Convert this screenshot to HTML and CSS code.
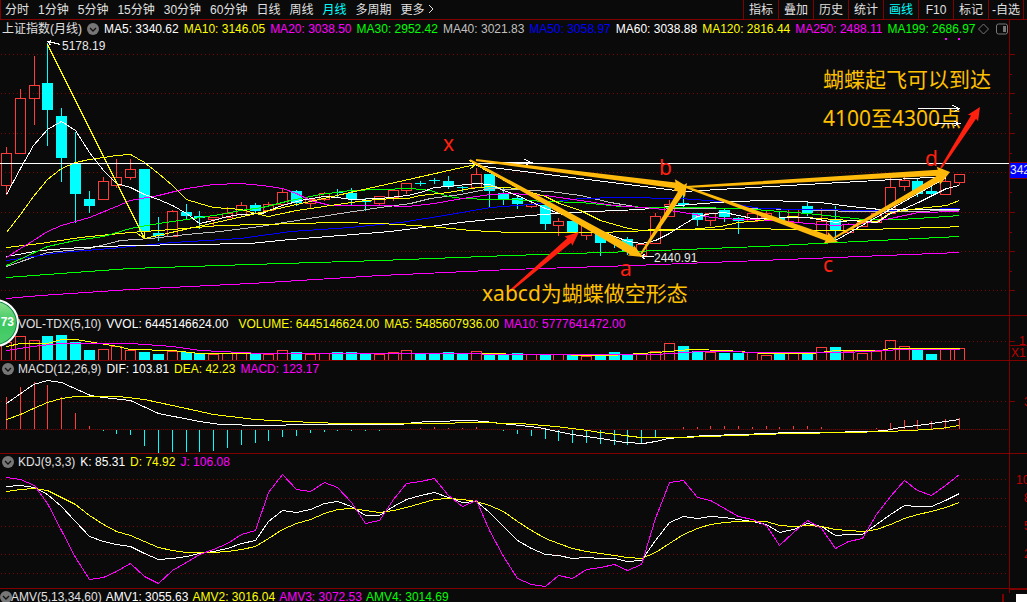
FILE: index.html
```html
<!DOCTYPE html>
<html lang="zh-CN">
<head>
<meta charset="utf-8">
<title>上证指数(月线)</title>
<link rel="stylesheet" href="styles.css">
</head>
<body>
<svg class="defs" width="0" height="0" aria-hidden="true">
  <symbol id="chevron" viewBox="0 0 12 12"><circle cx="6" cy="6" r="6" fill="#777"/><path d="M3 5l3 3 3-3" fill="none" stroke="#111" stroke-width="1.3"/></symbol>
</svg>
<header class="toolbar">
  <nav class="periods">
    <button>分时</button><button>1分钟</button><button>5分钟</button><button>15分钟</button><button>30分钟</button><button>60分钟</button><button>日线</button><button>周线</button><button class="active">月线</button><button>多周期</button><button>更多<svg class="more" viewBox="0 0 6 10"><path d="M1 1l4 4-4 4" fill="none" stroke="currentColor"/></svg></button>
  </nav>
  <nav class="tools">
    <button>指标</button><button>叠加</button><button>历史</button><button>统计</button><button class="active">画线</button><button>F10</button><button>标记</button><button>-自选</button>
  </nav>
</header>
<main>
  <section class="panel">
    <div class="legend legend-main">
      <span class="title">上证指数(月线)</span>
      <button class="toggle" aria-label="展开"><svg viewBox="0 0 12 12"><use href="#chevron"/></svg></button>
      <span class="white">MA5: 3340.62</span><span class="yellow">MA10: 3146.05</span><span class="magenta">MA20: 3038.50</span><span class="green">MA30: 2952.42</span><span class="gray">MA40: 3021.83</span><span class="blue">MA50: 3058.97</span><span class="white">MA60: 3038.88</span><span class="yellow">MA120: 2816.44</span><span class="magenta">MA250: 2488.11</span><span class="green">MA199: 2686.97</span>
      <svg class="marks" viewBox="0 0 30 12" fill="none" stroke="#777"><path d="M5.500 1l5 5-5 5-5-5z"/><rect x="18.500" y="1" width="11" height="10" rx="2"/><path d="M25 3h3v6h-3z" fill="#777" stroke="none"/></svg>
    </div>
    <svg class="plot" id="price" viewBox="0 38 1027 277"></svg>
  </section>
  <section class="panel">
    <div class="legend">
      <span class="title">VOL-TDX(5,10)</span><span class="white wide">VVOL: 6445146624.00</span><span class="yellow">VOLUME: 6445146624.00</span><span class="yellow">MA5: 5485607936.00</span><span class="magenta">MA10: 5777641472.00</span>
    </div>
    <svg class="plot" id="volume" viewBox="0 333 1027 27"></svg>
    <div class="badge">73</div>
  </section>
  <section class="panel">
    <div class="legend">
      <button class="toggle" aria-label="展开"><svg viewBox="0 0 12 12"><use href="#chevron"/></svg></button>
      <span class="title">MACD(12,26,9)</span><span class="white">DIF: 103.81</span><span class="yellow">DEA: 42.23</span><span class="magenta">MACD: 123.17</span>
    </div>
    <svg class="plot" id="macd" viewBox="0 378 1027 75"></svg>
  </section>
  <section class="panel">
    <div class="legend">
      <button class="toggle" aria-label="展开"><svg viewBox="0 0 12 12"><use href="#chevron"/></svg></button>
      <span class="title">KDJ(9,3,3)</span><span class="white">K: 85.31</span><span class="yellow">D: 74.92</span><span class="magenta">J: 106.08</span>
    </div>
    <svg class="plot" id="kdj" viewBox="0 471 1027 117"></svg>
  </section>
  <section class="panel last">
    <div class="legend">
      <button class="toggle" aria-label="展开"><svg viewBox="0 0 12 12"><use href="#chevron"/></svg></button>
      <span class="title">AMV(5,13,34,60)</span><span class="white">AMV1: 3055.63</span><span class="yellow">AMV2: 3016.04</span><span class="magenta">AMV3: 3072.53</span><span class="green">AMV4: 3014.69</span>
    </div>
    <svg class="corner" viewBox="0 0 25 13"><path d="M7 0h18v1H8v3H7zM0 5h2v8H0z" fill="#800000"/><path d="M14 5h11v8H14z" fill="#fff"/></svg>
  </section>
</main>
<script src="chart.js"></script>
</body>
</html>
```
FILE: styles.css
```css
* { box-sizing: border-box; }
body {
  margin: 0;
  background: #0a0a0a;
  color: #e0e0e0;
  font: 12px/16px "Liberation Sans", "Noto Sans CJK SC", sans-serif;
  overflow: hidden;
}
button {
  padding: 0;
  border: 0;
  background: none;
  color: inherit;
  font: inherit;
  white-space: nowrap;
}
.defs { position: absolute; }
.toolbar {
  display: flex;
  justify-content: space-between;
  height: 20px;
  border-bottom: 1px solid #800000;
  border-left: 1px solid #800000;
}
.periods { display: flex; gap: 9px; padding-left: 4px; }
.periods .active, .tools .active { color: #00ffff; }
.more { width: 6px; height: 10px; margin-left: 3px; }
.tools { display: flex; padding-right: 3px; }
.tools button { width: 35px; border-left: 1px solid #800000; }
.tools button:last-child { width: 36px; border-right: 1px solid #800000; }
.panel { position: relative; border-bottom: 1px solid #800000; }
.panel.last { display: flex; justify-content: space-between; height: 13px; border: 0; overflow: hidden; }
.legend {
  display: flex;
  align-items: center;
  gap: 5px;
  height: 17px;
  margin-right: 17px;
  padding: 0 0 2px 18px;
  border-right: 1px solid #800000;
  white-space: nowrap;
  overflow: hidden;
}
.legend-main { height: 18px; padding: 0 0 0 2px; }
.last .legend { margin: 0; padding-left: 12px; border: 0; gap: 4px; }
.last .toggle { margin-left: -12px; margin-right: -5px; }
.wide { margin-right: 5px; }
.toggle { flex: none; width: 12px; height: 12px; margin-left: -16px; margin-right: -1px; }
.toggle svg { display: block; width: 12px; height: 12px; }
.legend-main .toggle { margin: 0; }
.marks { flex: none; width: 30px; height: 12px; margin-left: -3px; }
.corner { flex: none; width: 25px; height: 13px; }
.plot { display: block; width: 100%; height: auto; }
.white { color: #fff; }
.yellow { color: #ff0; }
.magenta { color: #f0f; }
.green { color: #0f0; }
.gray { color: #c0c0c0; }
.blue { color: #00f; }
.badge {
  position: absolute;
  top: -17px;
  left: -29px;
  width: 48px;
  height: 48px;
  padding-right: 3px;
  border: 2px solid #fff;
  border-radius: 50%;
  background: linear-gradient(#8ee08e, #3cc860 50%, #4fd070);
  box-shadow: inset 0 0 0 1px #188050;
  color: #fff;
  font: bold 12px/42px "Liberation Sans", sans-serif;
  text-align: right;
}
.axis-text { fill: #c00000; font-size: 12px; }
.price-text { fill: #e8e8e8; font-size: 12px; }
.note { fill: #ffc000; font: 21px "Noto Sans", "Noto Sans CJK SC", sans-serif; }
.point { fill: #ff2010; font: 21px "Noto Sans", sans-serif; }
```
FILE: chart.js
```javascript
const NS = 'http://www.w3.org/2000/svg';
const RED = '#ff3c3c', CYAN = '#00ffff', FRAME = '#800000', GOLD = '#ffb90a';
const cx = i => Math.round(6 + 13.81 * i);

function add(svg, tag, attrs, text) {
  const el = document.createElementNS(NS, tag);
  for (const k in attrs) el.setAttribute(k, attrs[k]);
  if (text) el.textContent = text;
  svg.appendChild(el);
}
function rect(svg, x, y, w, h, fill) {
  add(svg, 'rect', { x, y, width: w, height: h, fill, 'shape-rendering': 'crispEdges' });
}
function box(svg, x, y, w, h) {
  add(svg, 'rect', { x: x + 0.5, y: y + 0.5, width: w - 1, height: Math.max(h - 1, 1), fill: 'none', stroke: RED, 'shape-rendering': 'crispEdges' });
}
function line(svg, pts, color, dash) {
  const points = pts.map(p => (p[0] + 0.5) + ',' + (p[1] + 0.5)).join(' ');
  const attrs = { points, fill: 'none', stroke: color, 'shape-rendering': 'crispEdges' };
  if (dash) attrs['stroke-dasharray'] = dash;
  add(svg, 'polyline', attrs);
}
const pairs = s => s.split(' ').map(p => p.split(',').map(Number));
const series = s => s.split(' ').map((y, i) => [cx(i), +y]);
// dots sit on whole pixels, one in every four
function dots(svg, y, step) {
  let d = '';
  for (let x = 1; x < 1008; x += step) d += 'M' + x + ' ' + y + 'h1v1h-1z';
  add(svg, 'path', { d, fill: FRAME, 'shape-rendering': 'crispEdges' });
}
function grid(svg, ys) { ys.forEach(y => dots(svg, y, 4)); }
function arrow(svg, x1, y1, x2, y2, shaft, head, len, color) {
  const d = Math.hypot(x2 - x1, y2 - y1), ux = (x2 - x1) / d, uy = (y2 - y1) / d;
  const at = (t, o) => (x1 + ux * t - uy * o) + ',' + (y1 + uy * t + ux * o);
  add(svg, 'polygon', { points: [at(0, 1), at(d - len, shaft), at(d - len - 1, head), at(d, 0), at(d - len - 1, -head), at(d - len, -shaft), at(0, -1)].join(' '), fill: color });
}

const price = document.getElementById('price');
grid(price, [54, 93, 133, 172, 212, 251, 290]);
rect(price, 1009, 38, 1, 277, FRAME);
[54, 93, 133, 172, 212, 251, 290].forEach(y => rect(price, 1010, y, 5, 1, FRAME));
[74, 113, 153, 192, 232, 271].forEach(y => rect(price, 1010, y, 2, 1, FRAME));

// direction, body top, body bottom, high, low
const candles = `r,153,185,147,195 r,98,153,89,153 r,85,98,56,125 c,83,110,43,145 c,116,158,108,181 c,163,194,132,222 c,199,206,191,212 r,181,199,177,200 r,177,185,159,188 r,169,177,159,180
c,169,231,169,238 c,233,236,217,240 r,211,236,210,237 c,212,216,204,219 c,216,218,211,228 r,217,219,217,226 r,213,217,207,217 r,205,214,202,217 c,205,211,203,213 r,204,210,202,210
r,192,204,189,204 c,191,203,190,205 r,199,203,199,208 r,193,199,192,201 c,192,193,189,196 c,193,199,188,204 c,201,202,198,210 r,196,203,196,205 r,190,197,190,201 r,183,190,183,194
c,183,184,181,185 c,180,181,178,183 c,181,187,176,188 c,187,188,186,191 r,174,187,168,188 c,174,191,174,207 c,193,199,187,204 c,198,204,195,208 r,204,206,201,208 c,205,224,205,229
r,221,225,218,236 c,221,232,221,232 r,225,235,225,240 c,233,243,233,255 c,240,242,236,247 c,239,251,237,254 r,244,255,243,256 r,216,243,213,243 r,204,216,200,217 c,203,205,189,208
c,213,220,213,225 r,213,220,213,226 c,210,217,209,221 c,218,221,217,233 r,213,221,212,221 r,213,217,211,217 c,218,221,211,222 r,209,222,209,222 c,206,213,202,215 r,221,235,208,235
c,220,231,206,240 r,224,232,223,232 r,222,226,222,226 r,213,222,213,222 r,187,213,178,213 r,180,186,177,191 c,181,194,178,196 c,191,194,181,194 r,181,194,175,194 r,174,182,174,185`.split(/\s+/).map(s => s.split(','));
candles.forEach(([k, t, b, h, l], i) => {
  const x = cx(i); t = +t; b = +b; h = +h; l = +l;
  if (k === 'c') {
    rect(price, x, h, 1, l - h + 1, CYAN);
    rect(price, x - 5, t, 11, Math.max(b - t, 1), CYAN);
  } else {
    rect(price, x, h, 1, t - h, RED);
    rect(price, x, b, 1, Math.max(l - b, 0), RED);
    box(price, x - 5, t, 11, b - t + 1);
  }
});

line(price, pairs('6,277 60,273 130,268 250,264 380,260 510,255 633,251 760,246 837,242 959,236'), '#0f0');
line(price, pairs('6,298 40,295 130,289 250,283 380,275 510,269 633,265 760,260 959,252'), '#f0f');
line(price, pairs('6,266 47,252 89,248 120,240 150,238 186,234 220,231 260,226 290,221 340,213 380,207 410,203 430,198 460,194 490,188 510,189 550,191 580,195 610,202 640,207 690,208 750,208 800,209 850,211 900,211 959,210'), '#c0c0c0');
line(price, pairs('6,260 60,252 110,248 172,242 240,238 290,231 350,227 400,222 450,214 490,207 530,204 580,198 620,197 680,198 720,201 760,208 800,209 880,210 959,208'), '#00f');
line(price, pairs('6,256 40,250 80,247 130,245 190,244 250,243 290,239 340,235 390,231 430,226 460,222 490,219 530,215 570,212 640,209 690,204 730,201 770,200 820,202 850,206 880,209 959,209'), '#fff');
line(price, pairs('6,247 40,243 80,237 130,232 172,229 220,225 260,224 335,222 380,223 430,226 470,230 510,232 600,232 650,230 700,229 750,228 830,230 900,228 940,227 959,226'), '#ff0');
line(price, pairs('6,265 47,246 75,240 103,236 130,228 158,223 186,219 220,214 240,210 262,207 290,200 320,194 350,190 380,189 410,188 430,190 448,196 462,198 490,199 510,199 545,201 580,202 620,206 655,207 690,207 740,208 780,211 807,213 835,216 863,219 900,219 932,217 959,215'), '#0f0');
line(price, pairs('6,257 20,248 33,240 47,231 61,225 89,217 116,206 130,200 158,195 186,188 213,184 240,183 262,185 282,188 296,193 310,200 330,205 380,205 407,206 434,203 462,198 490,194 510,193 545,195 573,199 614,205 655,208 683,212 711,217 738,219 780,220 807,223 835,225 863,223 890,218 904,215 918,212 959,211'), '#f0f');
line(price, pairs('6,232 20,214 33,196 47,179 61,168 75,162 89,159 103,157 116,155 130,154 144,162 158,173 172,185 186,199 199,203 213,207 227,208 241,209 255,213 268,216 282,213 296,210 310,208 337,204 365,200 393,198 407,198 420,195 448,192 470,188 490,186 517,188 545,196 559,203 580,210 600,220 628,228 641,230 655,229 690,229 720,226 738,222 760,220 790,216 820,218 850,220 877,221 890,212 918,208 946,205 959,200'), '#ff0');
line(price, pairs('6,194 20,168 33,145 47,129 61,121 75,130 89,152 103,170 116,183 130,187 144,194 158,199 172,205 186,213 199,223 213,220 227,216 240,214 262,213 268,210 282,205 300,200 324,196 337,197 351,199 380,198 407,195 420,192 434,187 448,186 476,183 489,184 503,190 517,195 545,208 573,218 600,230 614,236 628,241 641,243 655,240 669,233 683,224 697,216 711,213 724,212 738,215 752,218 807,217 835,222 850,220 877,222 890,213 904,208 918,202 932,195 946,188 959,185'), '#fff');

// hand-drawn lines
line(price, pairs('47,44 144,238 475,164 641,256'), '#ff0');
line(price, pairs('137,233 144,238 144,231'), '#ff0');
line(price, pairs('469,160 475,164 470,168'), '#ff0');
line(price, pairs('476,165 683,191 946,176'), '#fff');
line(price, pairs('835,240 946,177'), '#fff');
rect(price, 0, 163, 1009, 1, '#fff');
line(price, pairs('500,162 531,162'), '#fff');
line(price, pairs('524,159 531,162 524,165'), '#fff');
line(price, pairs('60,44 48,41 51,40'), '#fff');
line(price, pairs('48,41 50,45'), '#fff');
line(price, pairs('653,256 641,256 645,253'), '#fff');
line(price, pairs('641,256 645,259'), '#fff');
rect(price, 945, 38, 2, 2, '#f0f');
rect(price, 958, 38, 2, 2, '#f0f');

add(price, 'text', { x: 62, y: 50, class: 'price-text' }, '5178.19');
add(price, 'text', { x: 654, y: 262, class: 'price-text' }, '2440.91');
arrow(price, 470, 160, 643, 257, 4, 6, 13, GOLD);
arrow(price, 476, 160, 688, 187, 3, 6, 13, GOLD);
arrow(price, 641, 254, 687, 183, 3, 6, 12, GOLD);
arrow(price, 686, 187, 838, 242, 3, 6, 12, GOLD);
arrow(price, 686, 187, 950, 172, 3, 6, 12, GOLD);
arrow(price, 834, 238, 950, 172, 3, 6, 14, GOLD);
arrow(price, 509, 292, 579, 232, 3, 6, 13, '#ff2010');
arrow(price, 941, 168, 980, 107, 3, 6, 12, '#ff2010');
[['x', 443, 151], ['a', 620, 276], ['b', 659, 175], ['c', 823, 272], ['d', 925, 166]].forEach(([t, x, y]) => add(price, 'text', { x, y, class: 'point' }, t));
add(price, 'text', { x: 823, y: 87, class: 'note' }, '蝴蝶起飞可以到达');
add(price, 'text', { x: 823, y: 126, class: 'note' }, '4100至4300点');
add(price, 'text', { x: 482, y: 301, class: 'note' }, 'xabcd为蝴蝶做空形态');
line(price, pairs('917,108 959,108'), '#fff');
line(price, pairs('952,105 959,108 954,111'), '#fff');
line(price, pairs('934,123 959,123'), '#fff');
line(price, pairs('954,121 959,123 954,125'), '#fff');
rect(price, 1009, 162, 18, 17, FRAME);
rect(price, 1010, 163, 17, 15, '#00f');
add(price, 'text', { x: 1010, y: 174, class: 'price-text' }, '342');

const volume = document.getElementById('volume');
grid(volume, [341]);
'342 336 340 336 335 342 350 349 346 350 352 354 351 352 353 354 353 353 353 354 350 352 354 353 352 352 353 354 352 350 353 353 352 353 351 353 354 353 354 355 354 354 356 355 352 354 353 351 343 346 351 352 353 353 352 355 353 352 352 347 347 351 353 351 340 346 349 354 349 348'.split(' ').forEach((y, i) => {
  if (candles[i][0] === 'c') rect(volume, cx(i) - 5, +y, 11, 360 - y, CYAN);
  else box(volume, cx(i) - 5, +y, 11, 364 - y);
});
line(volume, pairs('6,346 20,343 47,343 61,339 75,339 100,343 117,346 130,349 172,350 199,353 480,353 530,354 610,355 640,353 655,352 668,351 690,349 727,350 750,352 765,353 812,353 835,350 880,350 890,348 959,348'), '#ff0');
line(volume, pairs('6,350 40,345 61,343 130,343 172,346 200,350 240,352 260,353 400,353 560,354 655,354 700,351 780,352 845,352 885,350 900,349 959,349'), '#f0f');
rect(volume, 1009, 333, 1, 27, FRAME);
rect(volume, 1010, 341, 5, 1, FRAME);
rect(volume, 1010, 345, 17, 1, FRAME);
add(volume, 'text', { x: 1019, y: 345, class: 'axis-text' }, '1');
add(volume, 'text', { x: 1011, y: 357, class: 'axis-text' }, 'X1');

const macd = document.getElementById('macd');
grid(macd, [401]);
dots(macd, 429, 2);
'397 387 382 385 397 413 426 430 433 434 445 452 451 451 451 450 447 444 442 440 436 435 432 431 430 430 430 430 429 429 428 427 428 428 427 429 430 433 435 438 440 442 442 443 444 444 443 437 429 427 427 426 426 426 427 426 427 426 426 427 429 429 429 428 423 420 420 421 419 418'.split(' ').forEach((y, i) => {
  if (y < 429) rect(macd, cx(i), +y, 1, 429 - y, RED);
  else if (y > 429) rect(macd, cx(i), 430, 1, y - 429, CYAN);
});
line(macd, pairs('6,403 33,384 47,380 61,382 90,395 103,397 130,400 158,413 199,421 220,424 262,425 310,424 400,424 414,422 430,421 470,420 484,421 500,423 520,425 538,427 552,430 572,434 600,438 625,442 643,443 655,441 668,438 680,437 705,435 742,434 790,432 820,432 870,431 885,430 900,427 925,424 945,421 959,419'), '#fff');
line(macd, pairs('6,419 20,414 33,408 47,402 61,398 75,396 118,396 144,399 172,405 213,414 255,419 290,421 340,423 440,423 470,422 520,423 555,426 580,429 600,432 640,437 680,437 735,435 790,433 850,432 885,431 910,430 940,428 959,425'), '#ff0');
rect(macd, 1009, 378, 1, 75, FRAME);
rect(macd, 1010, 401, 5, 1, FRAME);
add(macd, 'text', { x: 1024, y: 406, class: 'axis-text' }, '3');

const kdj = document.getElementById('kdj');
grid(kdj, [479, 498, 526, 554, 573]);
rect(kdj, 1009, 471, 1, 117, FRAME);
line(kdj, series('486 485 487 494 506 521 536 541 544 546 553 559 558 556 553 551 548 543 540 521 510 512 509 503 501 506 515 515 506 499 495 492 497 502 501 512 526 540 548 554 555 558 557 558 558 561 560 540 522 516 518 516 517 519 521 524 532 529 523 526 535 534 534 524 514 505 506 506 500 493'), '#fff');
line(kdj, series('491 489 488 490 497 504 515 524 531 535 541 547 550 552 552 552 551 549 546 538 529 523 519 513 509 508 510 512 510 507 503 499 498 499 501 505 511 521 530 538 543 548 551 553 555 557 558 552 543 534 528 524 522 521 521 521 525 526 525 526 529 530 531 529 524 518 514 511 507 502'), '#ff0');
line(kdj, series('477 479 485 503 530 557 579 577 571 563 576 583 570 562 554 549 543 534 530 492 474 489 491 482 487 502 523 520 499 483 481 478 495 506 500 530 556 578 584 586 575 578 569 567 564 570 564 518 482 480 497 500 508 516 519 525 545 532 520 528 548 541 538 514 496 480 490 495 485 474'), '#f0f');
[['100', 1016, 484], ['80', 1024, 502], ['50', 1024, 530], ['20', 1024, 558]].forEach(([t, x, y]) => add(kdj, 'text', { x, y, class: 'axis-text' }, t));
```
